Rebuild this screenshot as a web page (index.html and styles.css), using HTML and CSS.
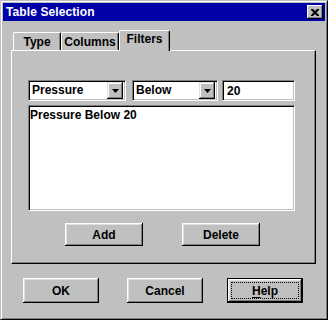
FILE: index.html
```html
<!DOCTYPE html>
<html lang="en">
<head>
    <meta charset="UTF-8">
    <title>Table Selection</title>
    <link rel="stylesheet" href="styles.css">
</head>
<body>
    <div class="window">
        <div class="title-bar">
            <span class="title">Table Selection</span>
            <div class="close-btn">
                <svg width="8" height="7" viewBox="0 0 8 7">
                    <path d="M0 0h2l2 2 2-2h2v1l-2.5 2.5 2.5 2.5v1h-2l-2-2-2 2h-2v-1l2.5-2.5-2.5-2.5z" fill="#000"/>
                </svg>
            </div>
        </div>

        <div class="tabs">
            <div class="tab tab-type">Type</div>
            <div class="tab tab-columns">Columns</div>
            <div class="tab tab-filters active">Filters</div>
        </div>

        <div class="panel">
            <div class="filter-row">
                <div class="field combo combo-column">
                    <span class="value">Pressure</span>
                    <div class="arrow"><svg width="7" height="4" viewBox="0 0 7 4"><polygon points="0,0 7,0 3.5,4" fill="#000"/></svg></div>
                </div>
                <div class="field combo combo-op">
                    <span class="value">Below</span>
                    <div class="arrow"><svg width="7" height="4" viewBox="0 0 7 4"><polygon points="0,0 7,0 3.5,4" fill="#000"/></svg></div>
                </div>
                <div class="field text-field">
                    <span class="value">20</span>
                </div>
            </div>

            <div class="field list-box">
                <div class="list-item">Pressure Below 20</div>
            </div>

            <div class="panel-buttons">
                <div class="btn btn-small">Add</div>
                <div class="btn btn-small">Delete</div>
            </div>
        </div>

        <div class="dialog-buttons">
            <div class="btn btn-ok">OK</div>
            <div class="btn btn-cancel">Cancel</div>
            <div class="btn btn-help default"><span class="focus"><u>H</u>elp</span></div>
        </div>
    </div>
</body>
</html>
```

FILE: styles.css
```css
body {
    margin: 0;
    background-color: #c0c0c0;
    font-family: "Liberation Sans", Arial, sans-serif;
    font-size: 12px;
    font-weight: bold;
    color: #000;
}

.window {
    width: 328px;
    height: 320px;
    box-sizing: border-box;
    border: 1px solid;
    border-color: #c0c0c0 #000 #000 #c0c0c0;
    box-shadow: inset 1px 1px #fff, inset -1px -1px #808080;
    padding: 2px;
    display: flex;
    flex-direction: column;
}

.title-bar {
    height: 18px;
    background-color: #0000a8;
    color: #fff;
    display: flex;
    align-items: center;
    justify-content: space-between;
    padding: 0 2px 0 3px;
}

.title {
    line-height: 18px;
    letter-spacing: 0.1px;
}

.close-btn {
    width: 16px;
    height: 14px;
    box-sizing: border-box;
    background-color: #c0c0c0;
    box-shadow: inset -1px -1px #000, inset 1px 1px #fff, inset -2px -2px #808080;
    display: flex;
    align-items: center;
    justify-content: center;
    padding-right: 1px;
}

.tabs {
    display: flex;
    align-items: flex-end;
    height: 20px;
    margin-top: 9px;
    padding-left: 10px;
    position: relative;
    z-index: 1;
}

.tab {
    height: 18px;
    box-sizing: border-box;
    border-left: 1px solid #fff;
    border-top: 1px solid #fff;
    border-right: 1px solid #000;
    border-radius: 2px 2px 0 0;
    box-shadow: inset -1px 0 #808080;
    text-align: center;
    line-height: 18px;
}

.tab-type {
    width: 48px;
}

.tab-columns {
    width: 58px;
}

.tab-filters {
    width: 51px;
}

.tab.active {
    height: 21px;
    margin-bottom: -1px;
    background-color: #c0c0c0;
    line-height: 16px;
}

.panel {
    height: 214px;
    margin: 0 9px 0 8px;
    box-sizing: border-box;
    border: 1px solid;
    border-color: #fff #000 #000 #fff;
    box-shadow: inset -1px -1px #808080;
    padding: 29px 0 0 16px;
}

.field {
    box-sizing: border-box;
    background-color: #fff;
    border: 1px solid;
    border-color: #808080 #fff #fff #808080;
    box-shadow: inset 1px 1px #000, inset -1px -1px #c0c0c0;
}

.filter-row {
    display: flex;
    height: 21px;
}

.combo {
    display: flex;
    align-items: center;
    justify-content: space-between;
    padding: 2px;
}

.combo-column {
    width: 98px;
    margin-right: 6px;
}

.combo-op {
    width: 86px;
    margin-right: 4px;
}

.text-field {
    width: 73px;
    padding: 2px 3px;
}

.value {
    padding-left: 1px;
    line-height: 17px;
}

.arrow {
    width: 16px;
    height: 17px;
    box-sizing: border-box;
    background-color: #c0c0c0;
    box-shadow: inset -1px -1px #000, inset 1px 1px #dfdfdf, inset -2px -2px #808080, inset 2px 2px #fff;
    display: flex;
    align-items: center;
    justify-content: center;
}

.list-box {
    width: 267px;
    height: 106px;
    margin-top: 4px;
    padding: 2px 2px 2px 1px;
}

.list-item {
    line-height: 14px;
}

.panel-buttons {
    display: flex;
    gap: 39px;
    margin-top: 12px;
    padding-left: 37px;
}

.btn {
    box-sizing: border-box;
    background-color: #c0c0c0;
    box-shadow: inset -1px -1px #000, inset 1px 1px #fff, inset -2px -2px #808080, inset 2px 2px #dfdfdf;
    display: flex;
    align-items: center;
    justify-content: center;
}

.btn-small {
    width: 78px;
    height: 23px;
}

.dialog-buttons {
    display: flex;
    margin-top: 14px;
    padding-left: 20px;
}

.btn-ok, .btn-cancel, .btn-help {
    width: 76px;
    height: 25px;
}

.btn-ok {
    margin-right: 28px;
}

.btn-cancel {
    margin-right: 24px;
}

.btn.default {
    border: 1px solid #000;
}

.focus {
    flex: 1;
    align-self: stretch;
    margin: 3px;
    border: 1px dotted #000;
    display: flex;
    align-items: center;
    justify-content: center;
}

.focus u {
    text-underline-offset: 2px;
}
```
